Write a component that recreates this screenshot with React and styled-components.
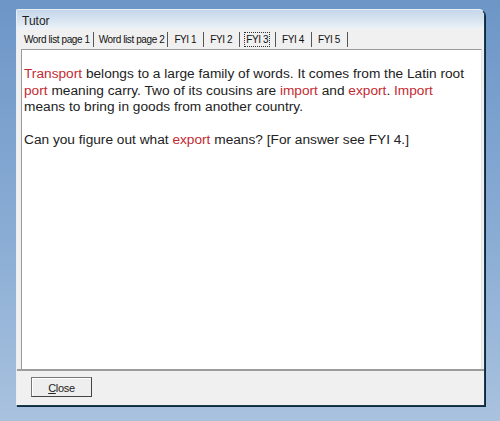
import React from "react";
import styled, { createGlobalStyle } from "styled-components";

const GlobalStyle = createGlobalStyle`
  html, body { margin: 0; padding: 0; }
  body {
    width: 500px;
    height: 421px;
    overflow: hidden;
    background: linear-gradient(180deg, #6d96c7 0%, #89acd4 55%, #a9c2df 100%);
    font-family: "Liberation Sans", Arial, sans-serif;
  }
`;

const tabs = ["Word list page 1", "Word list page 2", "FYI 1", "FYI 2", "FYI 3", "FYI 4", "FYI 5"];

const App = () => {
  return (
    <Page>
      <GlobalStyle />
      <Window>
        <TitleBar>Tutor</TitleBar>
        <TabRow>
          {tabs.map((t, i) => (
            <Tab key={t} short={i > 1}>
              <TabLabel active={i === 4}>{t}</TabLabel>
            </Tab>
          ))}
        </TabRow>
        <Content>
          <Para>
            <Red>Transport</Red> belongs to a large family of words. It comes from the Latin root{" "}
            <Red>port</Red> meaning carry. Two of its cousins are <Red>import</Red> and{" "}
            <Red>export</Red>. <Red>Import</Red> means to bring in goods from another country.
          </Para>
          <Para>
            Can you figure out what <Red>export</Red> means? [For answer see FYI 4.]
          </Para>
        </Content>
        <Footer>
          <Button>
            <u>C</u>lose
          </Button>
        </Footer>
      </Window>
    </Page>
  );
};

const Page = styled.div`
  padding: 9px 0 0 16px;
`;

const Window = styled.div`
  width: 467px;
  height: 395px;
  display: flex;
  flex-direction: column;
  background: #f0f0f0;
  border: 1px solid #e8eef5;
  border-right-color: #1c3b52;
  border-bottom-color: #1c3b52;
  border-top-right-radius: 6px;
  border-top-left-radius: 2px;
  box-shadow: 1px 1px 0 #0e2a3d;
`;

const TitleBar = styled.div`
  height: 19px;
  padding: 4px 0 0 5px;
  box-sizing: border-box;
  font-family: "Liberation Sans", Arial, sans-serif;
  font-size: 12px;
  color: #1e1e1e;
  background: linear-gradient(180deg, #c5d6ea 0%, #dbe6f2 60%, #eef3f8 100%);
  border-top-right-radius: 6px;
`;

const TabRow = styled.div`
  height: 20px;
  display: flex;
  align-items: center;
  padding-left: 5px;
  background: #f0f0f0;
`;

const Tab = styled.div`
  display: flex;
  align-items: center;
  height: 15px;
  padding: 0 ${(p) => (p.short ? "5px" : "1px")} 0 ${(p) => (p.short ? "1px" : "0")};
  border-right: 1px solid #555;
  font-size: 10px;
  letter-spacing: -0.4px;
  color: #111;
  margin-right: 3px;
`;

const TabLabel = styled.span`
  padding: 0 1px;
  line-height: 13px;
  border: 1px ${(p) => (p.active ? "dotted #333" : "solid transparent")};
`;

const Content = styled.div`
  margin: 0 2px 0 4px;
  height: 320px;
  box-sizing: border-box;
  background: #fff;
  border-left: 1px solid #9a9a9a;
  border-top: 1px solid #9a9a9a;
  border-right: 1px solid #e6e6e6;
  padding: 16px 10px 0 2px;
`;

const Para = styled.p`
  margin: 0 0 16px;
  font-family: "Liberation Sans", Arial, sans-serif;
  font-size: 13.7px;
  line-height: 16.5px;
  color: #222;
`;

const Red = styled.span`
  color: #c42a31;
`;

const Footer = styled.div`
  flex: 1;
  border-top: 2px solid #9c9c9c;
  padding: 6px 0 0 14px;
  background: #f0f0f0;
`;

const Button = styled.div`
  width: 61px;
  height: 20px;
  box-sizing: border-box;
  border: 1px solid #777;
  border-bottom-color: #444;
  border-right-color: #444;
  box-shadow: inset 1px 1px 0 #fff;
  background: #eeeeee;
  display: flex;
  align-items: center;
  justify-content: center;
  font-size: 11px;
  letter-spacing: -0.3px;
  color: #222;
  padding-top: 1px;
`;

export default App;
